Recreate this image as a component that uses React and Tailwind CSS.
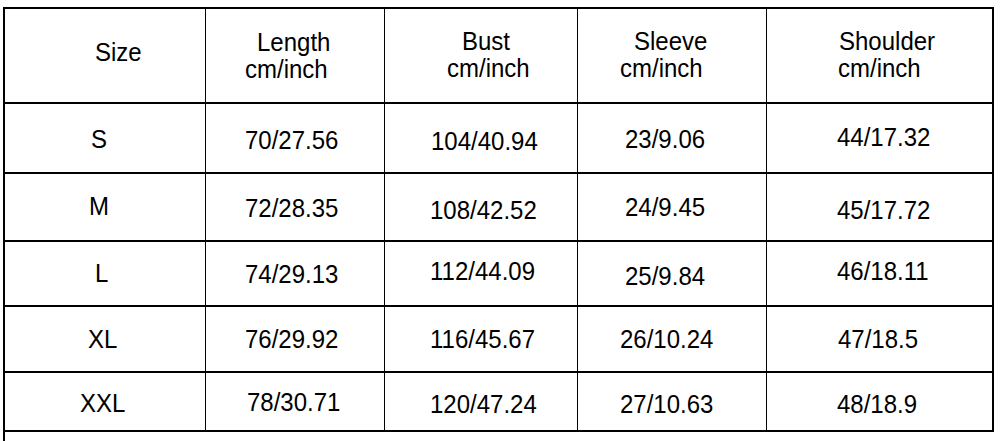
import React from "react"

// size chart, cells carry their own offsets because the source table is hand-laid
const header = [
  { lines: [{ t: "Size", c: "pl-[90px]" }], c: "pt-[29px]" },
  { lines: [{ t: "Length", c: "pl-[51px]" }, { t: "cm/inch", c: "pl-[39px]" }], c: "pt-[19px]" },
  { lines: [{ t: "Bust", c: "pl-[77px]" }, { t: "cm/inch", c: "pl-[62px]" }], c: "pt-[18px]" },
  { lines: [{ t: "Sleeve", c: "pl-[56px]" }, { t: "cm/inch", c: "pl-[42px]" }], c: "pt-[18px]" },
  { lines: [{ t: "Shoulder", c: "pl-[72px]" }, { t: "cm/inch", c: "pl-[71px]" }], c: "pt-[18px]" },
]

const rows = [
  [
    { t: "S", c: "pl-[86px] pt-[21px]" },
    { t: "70/27.56", c: "pl-[39px] pt-[22px]" },
    { t: "104/40.94", c: "pl-[46px] pt-[23px]" },
    { t: "23/9.06", c: "pl-[47px] pt-[21px]" },
    { t: "44/17.32", c: "pl-[70px] pt-[19px]" },
  ],
  [
    { t: "M", c: "pl-[84px] pt-[18px]" },
    { t: "72/28.35", c: "pl-[39px] pt-[20px]" },
    { t: "108/42.52", c: "pl-[45px] pt-[22px]" },
    { t: "24/9.45", c: "pl-[47px] pt-[19px]" },
    { t: "45/17.72", c: "pl-[70px] pt-[22px]" },
  ],
  [
    { t: "L", c: "pl-[90px] pt-[17px]" },
    { t: "74/29.13", c: "pl-[39px] pt-[18px]" },
    { t: "112/44.09", c: "pl-[45px] pt-[15px]" },
    { t: "25/9.84", c: "pl-[47px] pt-[20px]" },
    { t: "46/18.11", c: "pl-[70px] pt-[15px]" },
  ],
  [
    { t: "XL", c: "pl-[83px] pt-[18px]" },
    { t: "76/29.92", c: "pl-[39px] pt-[18px]" },
    { t: "116/45.67", c: "pl-[45px] pt-[18px]" },
    { t: "26/10.24", c: "pl-[42px] pt-[18px]" },
    { t: "47/18.5", c: "pl-[71px] pt-[18px]" },
  ],
  [
    { t: "XXL", c: "pl-[75px] pt-[16px]" },
    { t: "78/30.71", c: "pl-[41px] pt-[15px]" },
    { t: "120/47.24", c: "pl-[45px] pt-[17px]" },
    { t: "27/10.63", c: "pl-[42px] pt-[17px]" },
    { t: "48/18.9", c: "pl-[70px] pt-[17px]" },
  ],
]

const cellBase = "border-b-2 border-black"
const colBorder = ["border-r", "border-r", "border-r", "border-r", "border-r-2"]
const txt = "whitespace-nowrap scale-y-[1.06] origin-center"

export default function App() {
  return (
    <div className="w-[1001px] h-[441px] bg-white pt-[7px] pl-[3px] font-['Liberation_Sans',Arial,sans-serif] text-[24px] leading-[27px] text-black">
      <div className="w-[991px] h-[434px] border-l-2 border-black">
        <div className="w-[989px] grid grid-cols-[201px_179px_193px_189px_227px] grid-rows-[95px_70px_68px_65px_66px_59px] border-t-2 border-black">
          {header.map((h, i) => (
            <div key={i} className={`${cellBase} ${colBorder[i]} ${h.c}`}>
              {h.lines.map((l, j) => (
                <div key={j} className={`${txt} ${l.c}`}>{l.t}</div>
              ))}
            </div>
          ))}
          {rows.map((row, r) =>
            row.map((cell, i) => (
              <div key={`${r}-${i}`} className={`${cellBase} ${colBorder[i]}`}>
                <div className={`${txt} ${cell.c}`}>{cell.t}</div>
              </div>
            ))
          )}
        </div>
      </div>
    </div>
  )
}
